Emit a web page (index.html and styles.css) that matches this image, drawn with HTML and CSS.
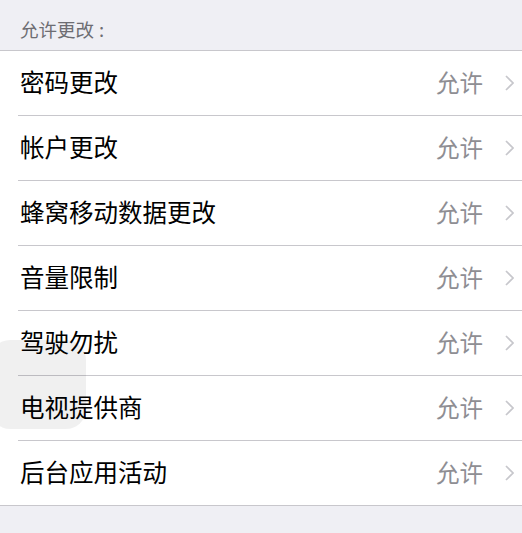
FILE: index.html
```html
<!DOCTYPE html>
<html lang="zh-CN">
<head>
  <meta charset="UTF-8" />
  <meta name="viewport" content="width=device-width, initial-scale=1" />
  <title>允许更改</title>
  <link rel="stylesheet" href="styles.css">
</head>
<body>

  <div class="group-title">允许更改<span class="colon">:</span></div>

  <ul class="list">
    <li class="row"><span class="label">密码更改</span><span class="value">允许</span><svg class="chevron" viewBox="0 0 9 16"><path d="M1 1l7 7-7 7"/></svg></li>
    <li class="row"><span class="label">帐户更改</span><span class="value">允许</span><svg class="chevron" viewBox="0 0 9 16"><path d="M1 1l7 7-7 7"/></svg></li>
    <li class="row"><span class="label">蜂窝移动数据更改</span><span class="value">允许</span><svg class="chevron" viewBox="0 0 9 16"><path d="M1 1l7 7-7 7"/></svg></li>
    <li class="row"><span class="label">音量限制</span><span class="value">允许</span><svg class="chevron" viewBox="0 0 9 16"><path d="M1 1l7 7-7 7"/></svg></li>
    <li class="row"><span class="label">驾驶勿扰</span><span class="value">允许</span><svg class="chevron" viewBox="0 0 9 16"><path d="M1 1l7 7-7 7"/></svg></li>
    <li class="row"><span class="label">电视提供商</span><span class="value">允许</span><svg class="chevron" viewBox="0 0 9 16"><path d="M1 1l7 7-7 7"/></svg></li>
    <li class="row"><span class="label">后台应用活动</span><span class="value">允许</span><svg class="chevron" viewBox="0 0 9 16"><path d="M1 1l7 7-7 7"/></svg></li>
  </ul>

  <!-- assistive touch button floating over the list -->
  <div class="assistive"></div>

</body>
</html>
```

FILE: styles.css
```css
* {
  margin: 0;
  padding: 0;
  box-sizing: border-box;
}

body {
  font-family: "Noto Sans CJK SC", "Noto Sans", sans-serif;
  background: #efeff4;
  color: #000;
  height: 533px;
  position: relative;
  overflow: hidden;
}

.group-title {
  height: 50px;
  padding: 8px 20px 0;
  display: flex;
  align-items: center;
  font-size: 18.5px;
  color: #6d6d72;
}

.group-title .colon {
  margin-left: 5px;
}

.list {
  list-style: none;
  background: #fff;
  border-top: 1px solid #c8c7cc;
  border-bottom: 1px solid #c8c7cc;
}

.row {
  height: 65px;
  display: flex;
  align-items: center;
  margin-left: 18px;
  padding: 0 8px 3px 2px;
  border-bottom: 1px solid #c8c7cc;
}

.row:last-child {
  border-bottom: none;
  height: 64px;
}

.label {
  flex: 1;
  font-size: 24.5px;
}

.value {
  font-size: 23.5px;
  color: #8e8e93;
  margin-right: 22px;
}

.chevron {
  width: 9px;
  height: 16px;
  margin-top: 3px;
  fill: none;
  stroke: #c7c7cc;
  stroke-width: 1.7;
}

.assistive {
  position: absolute;
  left: -10px;
  top: 340px;
  width: 96px;
  height: 89px;
  border-radius: 20px;
  background: rgba(0, 0, 0, 0.06);
}
```
